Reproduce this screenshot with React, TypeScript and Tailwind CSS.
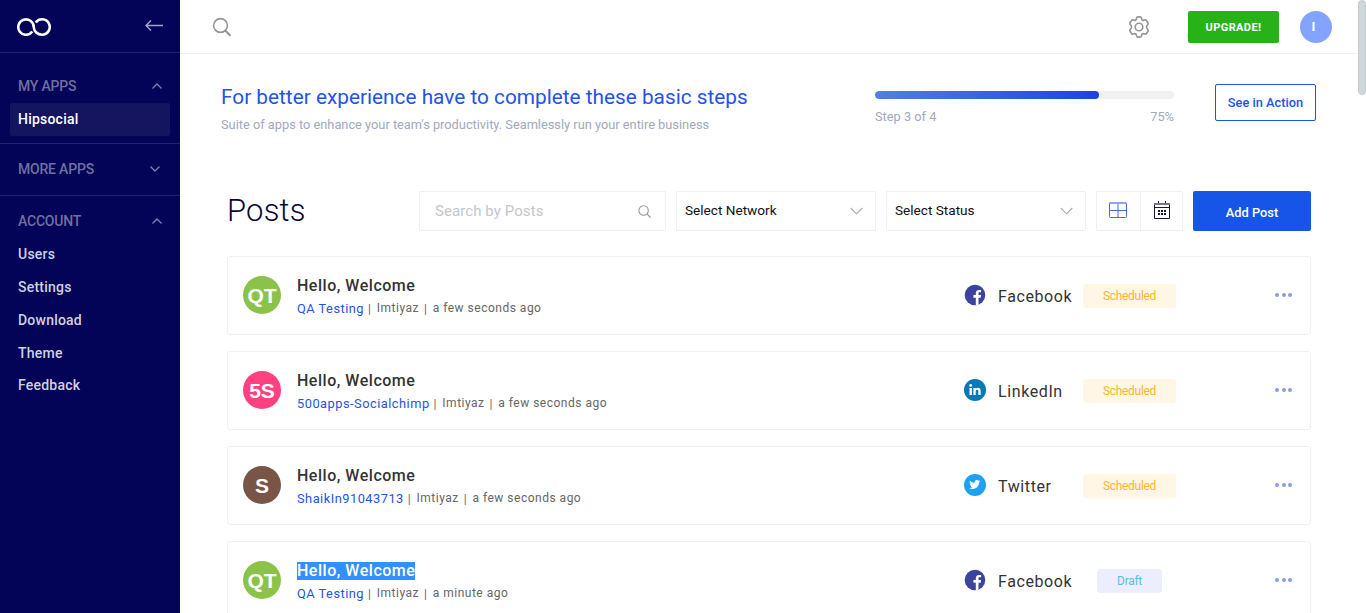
import { ReactNode } from "react";

function Caret({ down = false }: { down?: boolean }) {
  return (
    <svg viewBox="0 0 10 6" className="h-[6px] w-[10px]" fill="none" stroke="#8080ac" strokeWidth="1.3">
      <path d={down ? "M.5.5 5 5 9.500.5" : "M.5 5.500 5 1 9.500 5.500"} />
    </svg>
  );
}

function Chevron() {
  return (
    <svg viewBox="0 0 13 8" className="h-2 w-[13px]" fill="none" stroke="#a9a9a9" strokeWidth="1.1">
      <path d="M.7 1 6.500 6.800 12.300 1" />
    </svg>
  );
}

function Heading({ children, down }: { children: ReactNode; down?: boolean }) {
  return (
    <div className={`flex h-5 items-center justify-between pl-[18px] text-[14px] font-medium tracking-[-0.200px] text-[#7070a0] ${down ? "pr-[20.500px]" : "pr-[18.500px]"}`}>
      <span>{children}</span>
      <Caret down={down} />
    </div>
  );
}

function Sidebar() {
  return (
    <aside className="h-full w-[180px] shrink-0 bg-[#030357] text-[14px] font-medium tracking-[0.220px]">
      <div className="flex h-[53px] items-center justify-between border-b border-[#23236c] pr-[17px] pl-[17px]">
        <svg viewBox="0 0 34 18" className="mt-[2px] h-[18px] w-[34px]" fill="none" stroke="#fff" strokeWidth="2.600">
          <path d="M15.300 13.500A7.700 7.700 0 1 1 16.700 9C17 13.500 20.500 16.700 25 16.700A7.700 7.700 0 1 0 18.700 4.600" />
        </svg>
        <svg viewBox="0 0 18 12" className="mb-px h-3 w-[18px]" fill="none" stroke="#a3a3ca" strokeWidth="1.500">
          <path d="M18 5.500H1M6 .5 1 5.500l5 5" />
        </svg>
      </div>
      <div className="h-[91px] border-b border-[#23236c] pt-[23px]">
        <Heading>MY APPS</Heading>
        <div className="mx-[10px] mt-[7px] flex h-[33px] items-center rounded-[2px] bg-[#14145f] pl-2 text-white">Hipsocial</div>
      </div>
      <div className="h-[52px] border-b border-[#23236c] pt-[15px]">
        <Heading down>MORE APPS</Heading>
      </div>
      <div className="pt-[15px]">
        <Heading>ACCOUNT</Heading>
        <ul className="mt-[7.400px] pl-[18px] text-[#d0d0e1]">
          {["Users", "Settings", "Download", "Theme", "Feedback"].map((t) => (
            <li key={t} className="flex h-[32.800px] items-center">{t}</li>
          ))}
        </ul>
      </div>
    </aside>
  );
}

function Header() {
  return (
    <header className="flex h-[54px] shrink-0 items-center border-b border-[#f0f0f0] pr-[26px] pl-[32px]">
      <svg viewBox="0 0 20 20" className="h-5 w-5" fill="none" stroke="#949494" strokeWidth="1.600">
        <circle cx="8.500" cy="8.500" r="6.900" />
        <path d="m13.200 13.500 5.300 5.300" strokeWidth="2" />
      </svg>
      <svg viewBox="0 0 24 24" className="ml-auto h-6 w-6" fill="none" stroke="#949494" strokeWidth="1.600" strokeLinejoin="round">
        <circle cx="12" cy="12" r="3.800" />
        <path d="M9.600 3.100Q9.800 1.900 11 1.900h2Q14.200 1.900 14.400 3.100c.3 2.100 1.500 2.800 3.400 2Q19 4.600 19.600 5.700l1.400 2.100Q21.700 8.900 20.700 9.700c-1.600 1.300-1.600 3.300 0 4.600q1 .8.300 1.900l-1.400 2.100q-.6 1.100-1.800.6c-1.900-.8-3.100-.1-3.400 2q-.2 1.200-1.400 1.200h-2q-1.200 0-1.400-1.200c-.3-2.100-1.500-2.800-3.400-2q-1.200.5-1.800-.6L3 16.200q-.7-1.100.3-1.900c1.600-1.300 1.600-3.300 0-4.600Q2.300 8.900 3 7.800l1.400-2.100Q5 4.600 6.200 5.100c1.900.8 3.100.1 3.400-2z" />
      </svg>
      <button className="ml-[37px] h-8 w-[91px] rounded-[2px] bg-[#27b317] pt-[3px] text-[11px] font-bold tracking-[0.400px] text-white">UPGRADE!</button>
      <div className="ml-[21px] flex h-8 w-8 items-center justify-center rounded-full bg-[#84a3ff] pr-[5px] text-[13px] font-bold text-white">I</div>
    </header>
  );
}

function Steps() {
  return (
    <section className="flex h-[137px] shrink-0 pt-[30px] pl-[41px]">
      <div className="w-[654px]">
        <h2 className="text-[20.800px] leading-[26px] text-[#2553e8]">For better experience have to complete these basic steps</h2>
        <p className="mt-[5px] text-[12.800px] leading-5 text-[#a2a9bd]">Suite of apps to enhance your team's productivity. Seamlessly run your entire business</p>
      </div>
      <div className="w-[299px] pt-[7px]">
        <div className="h-2 overflow-hidden rounded-full bg-[#f1f1f2]">
          <div className="h-full w-3/4 rounded-full bg-linear-to-r from-[#5180dc] to-[#1a42e4]" />
        </div>
        <div className="mt-[8px] flex justify-between text-[12.800px] leading-5 text-[#a2a9bd]">
          <span>Step 3 of 4</span>
          <span>75%</span>
        </div>
      </div>
      <button className="ml-[41px] h-[37px] w-[101px] rounded-[2px] border border-[#1a56e4] text-[12.800px] font-medium text-[#1a56e4]">See in Action</button>
    </section>
  );
}

function Select({ children }: { children: ReactNode }) {
  return (
    <div className="ml-[10px] flex h-10 w-[200px] items-center justify-between rounded-[1px] border border-[#f0f0f0] pr-3 pl-2 text-[13.600px] text-[#111]">
      <span className="pb-[2px]">{children}</span>
      <Chevron />
    </div>
  );
}

function Toolbar() {
  return (
    <div className="flex h-10 items-center">
      <h1 className="w-[192px] text-[31px] leading-10 font-light tracking-[0.200px] text-[#070738]">Posts</h1>
      <div className="flex h-10 w-[247px] items-center justify-between rounded-[1px] border border-[#f0f0f0] pr-[14px] pl-[15px] text-[15px] tracking-[0.080px] text-[#c4c6ca]">
        <span>Search by Posts</span>
        <svg viewBox="0 0 13 13" className="h-[13px] w-[13px]" fill="none" stroke="#999" strokeWidth="1.100">
          <circle cx="5.600" cy="5.500" r="4.700" />
          <path d="m9 9 3.500 3.500" />
        </svg>
      </div>
      <Select>Select Network</Select>
      <Select>Select Status</Select>
      <div className="ml-[10px] flex h-10 w-[87px] rounded-[1px] border border-[#f0f0f0]">
        <div className="flex w-[44px] items-center justify-center border-r border-[#f0f0f0] pr-px pb-[2px]">
          <svg viewBox="0 0 18 16" className="h-4 w-[18px]" fill="none" stroke="#4565ea">
            <rect x=".5" y=".5" width="17" height="15" rx="1" />
            <path d="M1 1h16" strokeWidth="2" stroke="#98a0eb" />
            <path d="M9 2v13.500M.5 8.500h17" />
          </svg>
        </div>
        <div className="flex flex-1 items-center justify-center pb-[2px]">
          <svg viewBox="0 0 16 18" className="h-[18px] w-4" fill="none" stroke="#17173d">
            <path d="M.5 2.500v15h15v-15M.5 6.500h15M4.500 0v3M11.500 0v3" />
            <path d="M0 3h16" stroke="#77778c" strokeWidth="2" />
            <path d="M4 10h8M4 13h8" strokeWidth="2" strokeDasharray="2 1" />
          </svg>
        </div>
      </div>
      <button className="ml-[10px] h-10 w-[118px] rounded-[2px] bg-[#1755e8] pt-[3px] text-[12.800px] font-medium text-white">Add Post</button>
    </div>
  );
}

function NetworkIcon({ name }: { name: string }) {
  if (name === "Facebook")
    return (
      <svg viewBox="0 0 22 22" className="mb-px h-[22px] w-[22px]">
        <circle cx="11" cy="11" r="10.300" fill="#3b439e" />
        <path fill="#fff" d="M11.800 21.300v-7.500H9.400v-2.700h2.400V9.300c0-2.300 1.300-3.400 3.300-3.400h2v2.300h-1.300c-1 0-1.300.5-1.300 1.300v1.600h2.600l-.4 2.700h-2.200v7.100z" />
      </svg>
    );
  if (name === "LinkedIn")
    return (
      <svg viewBox="0 0 22 22" className="mb-px h-[22px] w-[22px]">
        <circle cx="11" cy="11" r="11" fill="#0678b6" />
        <g fill="#fff">
          <circle cx="6.700" cy="6.500" r="1.400" />
          <path d="M5.500 9h2.400v7H5.500zM9.400 9h2.300v1c.5-.8 1.300-1.200 2.300-1.200 2.100 0 2.700 1.400 2.700 3.400V16h-2.400v-3.500c0-1-.2-1.800-1.200-1.800-1.200 0-1.400.9-1.400 1.900V16H9.400z" />
        </g>
      </svg>
    );
  return (
    <svg viewBox="0 0 22 22" className="mb-px h-[22px] w-[22px]">
      <circle cx="11" cy="11" r="11" fill="#1da1f2" />
      <path
        transform="translate(5.200 5) scale(.46)"
        fill="#fff"
        d="M23.950 4.570a10 10 0 0 1-2.820.77 4.960 4.960 0 0 0 2.160-2.720c-.95.550-2 .960-3.130 1.180a4.920 4.920 0 0 0-8.380 4.480C7.690 8.100 4.070 6.130 1.640 3.160a4.920 4.920 0 0 0 1.520 6.570 4.900 4.900 0 0 1-2.230-.61v.060a4.920 4.920 0 0 0 3.950 4.830 5 5 0 0 1-2.210.08 4.940 4.940 0 0 0 4.600 3.420A9.870 9.870 0 0 1 0 19.540a14 14 0 0 0 7.550 2.210c9.050 0 14-7.500 14-13.980l-.02-.63a10 10 0 0 0 2.420-2.570z"
      />
    </svg>
  );
}

interface Post {
  initials: string;
  tone: string;
  account: string;
  time: string;
  network: string;
  status: string;
  selected?: boolean;
}

const posts: Post[] = [
  { initials: "QT", tone: "bg-[#8bc34a]", account: "QA Testing", time: "a few seconds ago", network: "Facebook", status: "Scheduled" },
  { initials: "5S", tone: "bg-[#ff4081]", account: "500apps-Socialchimp", time: "a few seconds ago", network: "LinkedIn", status: "Scheduled" },
  { initials: "S", tone: "bg-[#795548]", account: "ShaikIn91043713", time: "a few seconds ago", network: "Twitter", status: "Scheduled" },
  { initials: "QT", tone: "bg-[#8bc34a]", account: "QA Testing", time: "a minute ago", network: "Facebook", status: "Draft", selected: true },
];

function PostCard({ post }: { post: Post }) {
  const draft = post.status === "Draft";
  return (
    <article className="flex h-[79px] shrink-0 items-center rounded-[3px] border border-[#f0f0f0] pr-[18px] pl-[15px]">
      <div className={`mb-px flex h-[38px] w-[38px] items-center justify-center rounded-full font-['Liberation_Sans',sans-serif] text-[21px] leading-none font-bold text-white ${post.tone}`}>
        {post.initials}
      </div>
      <div className="ml-4 w-[667px] pt-[3px]">
        <h3 className="flex h-5 items-center text-[16px] font-medium tracking-[0.520px] text-[#343434]">
          <span className={post.selected ? "bg-[#3390ff] leading-[18px] text-white" : "leading-[18px]"}>Hello, Welcome</span>
        </h3>
        <div className="mt-[2px] flex h-5 items-center text-[12px] tracking-[0.500px] text-[#666]">
          <span className="pt-[2px] text-[12.800px] text-[#2553e8]">{post.account}</span>
          <span className="ml-[4px] pt-[2px]">|</span>
          <span className="ml-[5.300px]">Imtiyaz</span>
          <span className="ml-[5px] pt-[2px]">|</span>
          <span className="ml-[5.300px]">{post.time}</span>
        </div>
      </div>
      <NetworkIcon name={post.network} />
      <span className="ml-3 w-[85px] pt-[2px] text-[16px] tracking-[0.600px] text-[#333]">{post.network}</span>
      <div className="flex w-[93px] justify-center pt-px">
        <span className={`flex h-6 items-center justify-center rounded-[3px] text-[12px] tracking-[-0.300px] ${draft ? "w-[65px] bg-[#eceefe] text-[#5bbde0]" : "w-[93px] bg-[#fff6e6] text-[#ffb52e]"}`}>
          {post.status}
        </span>
      </div>
      <div className="mb-[2px] ml-auto flex gap-[2.500px]">
        <i className="h-[4px] w-[4px] rounded-full bg-[#8f9be0]" />
        <i className="h-[4px] w-[4px] rounded-full bg-[#8f9be0]" />
        <i className="h-[4px] w-[4px] rounded-full bg-[#8f9be0]" />
      </div>
    </article>
  );
}

export default function App() {
  return (
    <div className="flex h-[613px] w-[1366px] overflow-hidden bg-white font-[Roboto,sans-serif]">
      <Sidebar />
      <main className="flex h-full w-[1178px] shrink-0 flex-col overflow-hidden">
        <Header />
        <Steps />
        <div className="shrink-0 px-[47px]">
          <Toolbar />
          <div className="mt-[25px] flex flex-col gap-4">
            {posts.map((post, i) => (
              <PostCard key={i} post={post} />
            ))}
          </div>
        </div>
      </main>
      <div className="w-2 shrink-0">
        <div className="h-[95px] w-2 rounded-full border border-[#c8c8c8] bg-[#cfd8dc]" />
      </div>
    </div>
  );
}
